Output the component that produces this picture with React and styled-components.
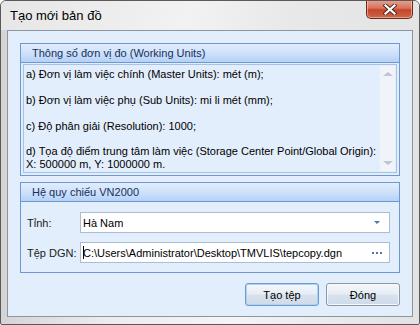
import React from "react"
import styled, { createGlobalStyle } from "styled-components"

const GlobalStyle = createGlobalStyle`
  html, body {
    margin: 0;
    padding: 0;
    background: #ffffff;
  }
  body {
    font-family: "Liberation Sans", "DejaVu Sans", sans-serif;
    font-size: 11px;
    color: #000;
  }
`

const lines = [
  "a) Đơn vị làm việc chính (Master Units): mét (m);",
  "",
  "b) Đơn vị làm việc phụ (Sub Units): mi li mét (mm);",
  "",
  "c) Độ phân giải (Resolution): 1000;",
  "",
  "d) Tọa độ điểm trung tâm làm việc (Storage Center Point/Global Origin):",
  "X: 500000 m, Y: 1000000 m.",
]

const App = () => {
  return (
    <>
      <GlobalStyle />
      <Window>
        <TitleBar>
          <Title>Tạo mới bản đồ</Title>
          <CloseButton aria-label="close">
            <svg width="14" height="11" viewBox="0 0 14 11">
              <path
                d="M2.5 1.5 L11.5 9.5 M11.5 1.5 L2.5 9.5"
                stroke="#4a2a24"
                strokeWidth="4"
                strokeLinecap="square"
              />
              <path
                d="M2.5 1.5 L11.5 9.5 M11.5 1.5 L2.5 9.5"
                stroke="#ffffff"
                strokeWidth="2.2"
                strokeLinecap="square"
              />
            </svg>
          </CloseButton>
        </TitleBar>
        <Frame>
          <Client>
            <Group>
              <GroupHeader>Thông số đơn vị đo (Working Units)</GroupHeader>
              <InfoBox>
                <InfoText>
                  {lines.map((l, i) => (
                    <Line key={i}>{l || "\u00a0"}</Line>
                  ))}
                </InfoText>
                <ScrollBar>
                  <Arrow $dir="up" />
                  <Arrow $dir="down" />
                </ScrollBar>
              </InfoBox>
            </Group>

            <Group $grow>
              <GroupHeader>Hệ quy chiếu VN2000</GroupHeader>
              <Form>
                <Label>Tỉnh:</Label>
                <Field>
                  <FieldText>Hà Nam</FieldText>
                  <DropArrow />
                </Field>
                <Label>Tệp DGN:</Label>
                <Field>
                  <FieldText>
                    <Caret />C:\Users\Administrator\Desktop\TMVLIS\tepcopy.dgn
                  </FieldText>
                  <Dots>
                    <Dot />
                    <Dot />
                    <Dot />
                  </Dots>
                </Field>
              </Form>
            </Group>

            <Buttons>
              <Button $default>Tạo tệp</Button>
              <Button>Đóng</Button>
            </Buttons>
          </Client>
        </Frame>
      </Window>
    </>
  )
}

export default App

const Window = styled.div`
  width: 420px;
  height: 325px;
  box-sizing: border-box;
  display: flex;
  flex-direction: column;
  border: 1px solid #5a5a5a;
  border-radius: 6px 6px 2px 2px;
  background: linear-gradient(90deg, #d4d4d4 0%, #ececec 25%, #f4f4f4 55%, #e2e2e2 100%);
  overflow: hidden;
`

const TitleBar = styled.div`
  height: 29px;
  display: flex;
  align-items: flex-start;
  justify-content: space-between;
  padding-left: 9px;
  padding-right: 6px;
  background: linear-gradient(100deg, #e6e6e6 0%, #f2f2f2 45%, #e8e8e8 70%, #e4e4e4 100%);
`

const Title = styled.div`
  font-size: 13px;
  line-height: 15px;
  margin-top: 7px;
  color: #000;
`

const CloseButton = styled.div`
  width: 45px;
  height: 18px;
  margin-top: -1px;
  display: flex;
  align-items: center;
  justify-content: center;
  border: 1px solid #6b2a1e;
  border-top: none;
  border-radius: 0 0 5px 5px;
  background: linear-gradient(180deg, #e8a493 0%, #d7735a 45%, #c4452a 55%, #d0664a 100%);
  box-shadow: inset 0 0 0 1px rgba(255, 220, 210, 0.5);
`

const Frame = styled.div`
  flex: 1;
  min-height: 0;
  display: flex;
  padding: 0 6px 7px 6px;
`

const Client = styled.div`
  flex: 1;
  min-width: 0;
  display: flex;
  flex-direction: column;
  border: 1px solid #8c96a3;
  background: #e3eefc;
  padding: 12px 12px 10px 12px;
`

const Group = styled.div`
  display: flex;
  flex-direction: column;
  border: 1px solid #6e98d4;
  margin-bottom: ${(p) => (p.$grow ? "10px" : "6px")};
`

const GroupHeader = styled.div`
  height: 18px;
  line-height: 18px;
  padding-left: 11px;
  font-size: 11px;
  color: #15305a;
  border-bottom: 1px solid #6e98d4;
  background: linear-gradient(180deg, #e2edfc 0%, #cfe1fa 50%, #b4d1f7 100%);
`

const InfoBox = styled.div`
  display: flex;
  margin: 1px 2px 2px 2px;
  border: 1px solid #a9c1e2;
  height: 107px;
  background: #e3eefc;
`

const InfoText = styled.div`
  flex: 1;
  min-width: 0;
  overflow: hidden;
  padding: 3px 0 0 2px;
`

const Line = styled.div`
  font-size: 11px;
  line-height: 12.9px;
  white-space: nowrap;
`

const ScrollBar = styled.div`
  width: 15px;
  margin: 1px;
  display: flex;
  flex-direction: column;
  justify-content: space-between;
  align-items: center;
  padding: 6px 0;
  background: #f0f3f7;
`

const Arrow = styled.div`
  width: 0;
  height: 0;
  border-left: 5px solid transparent;
  border-right: 5px solid transparent;
  ${(p) =>
    p.$dir === "up"
      ? "border-bottom: 4px solid #bcc5d1;"
      : "border-top: 4px solid #bcc5d1;"}
`

const Form = styled.div`
  display: grid;
  grid-template-columns: 53px minmax(0, 1fr);
  row-gap: 9px;
  align-items: center;
  padding: 10px 9px 9px 6px;
`

const Label = styled.div`
  font-size: 11px;
  color: #1a1a1a;
`

const Field = styled.div`
  height: 19px;
  min-width: 0;
  display: flex;
  align-items: center;
  justify-content: space-between;
  border: 1px solid #abbdd6;
  background: #ffffff;
  padding: 0 6px 0 2px;
`

const FieldText = styled.div`
  font-size: 11px;
  white-space: nowrap;
  overflow: hidden;
  display: flex;
  align-items: center;
`

const Caret = styled.span`
  display: inline-block;
  width: 1px;
  height: 13px;
  background: #000;
  margin-right: -1px;
`

const DropArrow = styled.div`
  width: 0;
  height: 0;
  border-left: 3px solid transparent;
  border-right: 3px solid transparent;
  border-top: 3px solid #4f77b0;
  margin-right: 3px;
`

const Dots = styled.div`
  display: flex;
  gap: 2px;
  margin-right: 1px;
`

const Dot = styled.span`
  width: 2px;
  height: 2px;
  background: #4f77b0;
`

const Buttons = styled.div`
  display: flex;
  justify-content: flex-end;
  gap: 7px;
`

const Button = styled.div`
  width: 72px;
  height: 21px;
  display: flex;
  align-items: center;
  justify-content: center;
  font-size: 11px;
  border-radius: 3px;
  border: 1px solid ${(p) => (p.$default ? "#6f9bd1" : "#8b97a6")};
  background: linear-gradient(180deg, #f4f7fb 0%, #e7edf5 48%, #d8e2ee 52%, #cfdbe9 100%);
  box-shadow: ${(p) =>
    p.$default ? "inset 0 0 0 1px #a9d3f2" : "inset 0 0 0 1px #f6f9fc"};
`
